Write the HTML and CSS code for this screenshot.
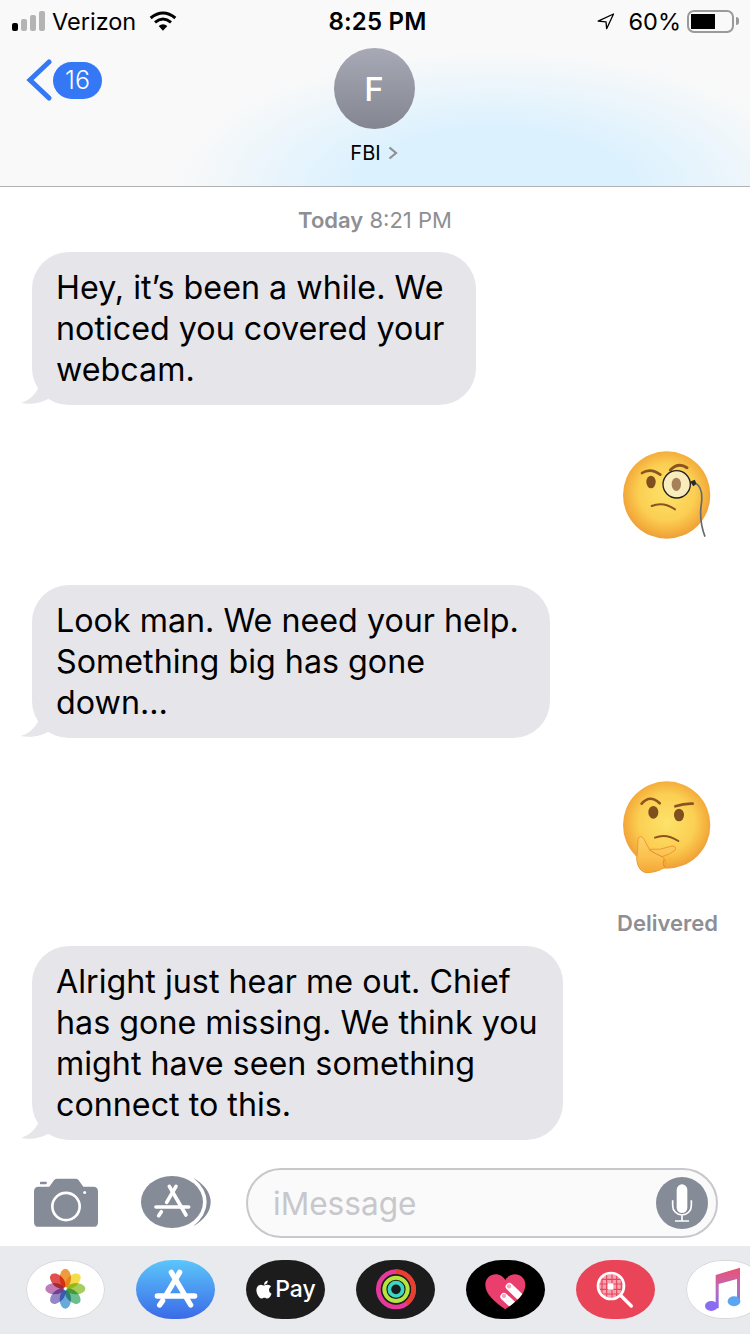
FILE: index.html
```html
<!DOCTYPE html>
<html lang="en">
<head>
<meta charset="utf-8">
<title>FBI</title>
<link rel="stylesheet" href="styles.css">
</head>
<body>
<div class="phone">
  <header class="header">
    <div class="status">
      <div class="status-left">
        <div class="signal"><i class="bar b1"></i><i class="bar b2"></i><i class="bar b3"></i><i class="bar b4"></i></div>
        <span class="carrier">Verizon</span>
        <svg class="wifi" viewBox="0 0 84 60"><path d="M5 21Q42-9 79 21" fill="none" stroke="#000" stroke-width="9"/><path d="M18 34Q42 14 66 34" fill="none" stroke="#000" stroke-width="9"/><path d="M29 45Q42 35 55 45L42 59z"/></svg>
      </div>
      <div class="time">8:25 PM</div>
      <div class="status-right">
        <svg class="loc" viewBox="0 0 54 52"><path d="M3 25L50 3 29 48 27 27z" fill="none" stroke="#000" stroke-width="4" stroke-linejoin="round"/></svg>
        <span class="pct">60%</span>
        <div class="battery"><div class="battery-fill"></div></div>
        <div class="battery-nub"></div>
      </div>
    </div>
    <nav class="nav">
      <div class="back">
        <svg class="back-chevron" viewBox="0 0 26 42"><path d="M23 3L4 21l19 18" fill="none" stroke="#3478f6" stroke-width="5" stroke-linecap="round" stroke-linejoin="miter"/></svg>
        <span class="badge">16</span>
      </div>
      <div class="contact">
        <div class="avatar">F</div>
        <div class="contact-name"><span>FBI</span><svg class="name-chevron" viewBox="0 0 10 14"><path d="M1.500 1.500L8 7l-6.500 5.500" fill="none" stroke="#8e8e93" stroke-width="2.200"/></svg></div>
      </div>
    </nav>
  </header>

  <main class="thread">
    <div class="stamp"><b>Today</b> 8:21 PM</div>
    <div class="bubble bubble-first">Hey, it’s been a while. We noticed you covered your webcam.<svg class="tail" viewBox="0 0 30 30"><path d="M20 0C20 14 12 24 0 28 10 30 22 28 30 22V0z" fill="#e5e5ea"/></svg></div>
    <div class="emoji-row emoji-gap-a">
      <svg class="emoji" viewBox="0 0 330 330">
        <defs>
          <radialGradient id="face1" cx="50%" cy="47%" r="52%"><stop offset="0" stop-color="#fde26a"/><stop offset=".62" stop-color="#fbcf52"/><stop offset=".9" stop-color="#f4ae3c"/><stop offset="1" stop-color="#eea13a"/></radialGradient>
        </defs>
        <circle cx="170" cy="165" r="131" fill="url(#face1)"/>
        <path d="M96 99Q122 82 151 104" fill="none" stroke="#8a5420" stroke-width="8" stroke-linecap="round"/>
        <path d="M181 90Q205 66 231 83" fill="none" stroke="#8a5420" stroke-width="9" stroke-linecap="round"/>
        <ellipse cx="123" cy="126" rx="14" ry="19" fill="#7f4f1e"/>
        <circle cx="200" cy="133" r="41" fill="#f8f0d4" fill-opacity=".8" stroke="#1f1f1f" stroke-width="4"/>
        <ellipse cx="199" cy="133" rx="14" ry="20" fill="#a68058"/>
        <path d="M125 198Q160 184 195 208" fill="none" stroke="#8a5420" stroke-width="6" stroke-linecap="round"/>
        <path d="M240 125l14-6 6 12-10 8z" fill="#2b2b2b"/>
        <path d="M258 130Q282 145 273 200 268 245 285 290" fill="none" stroke="#66686c" stroke-width="5"/>
      </svg>
    </div>
    <div class="bubble bubble-gap">Look man. We need your help. Something big has gone down…<svg class="tail" viewBox="0 0 30 30"><path d="M20 0C20 14 12 24 0 28 10 30 22 28 30 22V0z" fill="#e5e5ea"/></svg></div>
    <div class="emoji-row emoji-gap-b">
      <svg class="emoji" viewBox="0 0 330 330">
        <defs>
          <radialGradient id="face2" cx="50%" cy="47%" r="52%"><stop offset="0" stop-color="#fde26a"/><stop offset=".62" stop-color="#fbcf52"/><stop offset=".9" stop-color="#f4ae3c"/><stop offset="1" stop-color="#eea13a"/></radialGradient>
          <linearGradient id="hand" x1="0" y1="0" x2="0" y2="1"><stop offset="0" stop-color="#fdd36a"/><stop offset=".6" stop-color="#fbbf4e"/><stop offset="1" stop-color="#f5a636"/></linearGradient>
        </defs>
        <circle cx="170" cy="165" r="131" fill="url(#face2)"/>
        <path d="M95 101Q120 72 149 100" fill="none" stroke="#8a5420" stroke-width="8" stroke-linecap="round"/>
        <path d="M196 109Q222 100 248 101" fill="none" stroke="#8a5420" stroke-width="8" stroke-linecap="round"/>
        <ellipse cx="130" cy="127" rx="15" ry="19" fill="#7f4f1e"/>
        <ellipse cx="207" cy="135" rx="15" ry="19" fill="#7f4f1e"/>
        <path d="M135 203Q168 189 205 213" fill="none" stroke="#8a5420" stroke-width="6" stroke-linecap="round"/>
        <path d="M80 268Q84 232 84 208 90 192 101 206L118 238Q150 242 186 228 200 228 196 240 180 254 156 260 170 268 164 292 140 308 108 308 84 304 80 268z" fill="url(#hand)" stroke="#ee9a30" stroke-width="3"/>
        <path d="M118 240Q134 250 156 260" fill="none" stroke="#e08e2a" stroke-width="3"/>
        <path d="M162 268Q156 282 164 292" fill="none" stroke="#e08e2a" stroke-width="3"/>
      </svg>
    </div>
    <div class="delivered">Delivered</div>
    <div class="bubble bubble-last">Alright just hear me out. Chief has gone missing. We think you might have seen something connect to this.<svg class="tail" viewBox="0 0 30 30"><path d="M20 0C20 14 12 24 0 28 10 30 22 28 30 22V0z" fill="#e5e5ea"/></svg></div>
  </main>

  <section class="composer">
    <svg class="camera" viewBox="0 0 192 146">
      <path d="M14 26H46L60 6Q64 2 70 2H124Q130 2 134 6L148 26H178Q192 26 192 40V132Q192 146 178 146H14Q0 146 0 132V40Q0 26 14 26z" fill="#868b98"/>
      <rect x="18" y="11" width="20" height="7" rx="1" fill="#868b98"/>
      <circle cx="96" cy="85" r="41" fill="none" stroke="#fff" stroke-width="8"/>
      <circle cx="152" cy="43" r="4.500" fill="#fff"/>
    </svg>
    <svg class="apps" viewBox="0 0 216 162">
      <path d="M160 8Q212 40 212 81T160 154Q200 120 200 81T160 8z" fill="#868b98"/>
      <ellipse cx="96" cy="81" rx="93" ry="78" fill="#868b98"/>
      <g fill="none" stroke="#fff" stroke-width="11" stroke-linecap="round">
        <path d="M108 34L80 82"/><path d="M88 34l50 86"/><path d="M48 96h98"/><path d="M64 110l-8 12"/>
      </g>
    </svg>
    <div class="input">
      <span class="placeholder">iMessage</span>
      <svg class="mic" viewBox="0 0 156 156">
        <circle cx="78" cy="78" r="78" fill="#868b98"/>
        <rect x="62" y="22" width="32" height="86" rx="16" fill="#fff"/>
        <path d="M50 70v16a28 28 0 0 0 56 0V70M78 114v18M57 132h42" fill="none" stroke="#fff" stroke-width="5"/>
      </svg>
    </div>
  </section>

  <section class="strip">
    <div class="pill pill-white">
      <svg class="flower" viewBox="0 0 237 177">
        <ellipse class="petal" cx="118" cy="54" rx="17" ry="28" fill="#f09a3e"/>
        <ellipse class="petal" cx="118" cy="54" rx="17" ry="28" fill="#f4dd4c" transform="rotate(45 118 86)"/>
        <ellipse class="petal" cx="118" cy="54" rx="17" ry="28" fill="#a4cf5e" transform="rotate(90 118 86)"/>
        <ellipse class="petal" cx="118" cy="54" rx="17" ry="28" fill="#6cbf8c" transform="rotate(135 118 86)"/>
        <ellipse class="petal" cx="118" cy="54" rx="17" ry="28" fill="#6aa9dc" transform="rotate(180 118 86)"/>
        <ellipse class="petal" cx="118" cy="54" rx="17" ry="28" fill="#9487c8" transform="rotate(225 118 86)"/>
        <ellipse class="petal" cx="118" cy="54" rx="17" ry="28" fill="#c07cb8" transform="rotate(270 118 86)"/>
        <ellipse class="petal" cx="118" cy="54" rx="17" ry="28" fill="#e0504c" transform="rotate(315 118 86)"/>
      </svg>
    </div>
    <div class="pill pill-store">
      <svg viewBox="0 0 237 177">
        <g fill="none" stroke="#fff" stroke-width="16" stroke-linecap="round">
          <path d="M131 37L92 102"/><path d="M106 37l58 98"/><path d="M64 108h112"/><path d="M80 122l-9 13"/>
        </g>
      </svg>
    </div>
    <div class="pill pill-dark pill-pay">
      <svg class="apple" viewBox="3 3 17 18"><path fill="#fff" d="M17.050 20.280c-.98.95-2.050.8-3.080.35-1.090-.46-2.090-.48-3.240 0-1.440.62-2.200.44-3.060-.35C2.790 15.250 3.510 7.590 9.050 7.310c1.350.07 2.290.74 3.080.8 1.180-.24 2.310-.93 3.570-.84 1.510.12 2.650.72 3.400 1.800-3.120 1.870-2.380 5.980.48 7.130-.57 1.500-1.310 2.990-2.540 4.090zM12.030 7.250c-.15-2.230 1.660-4.070 3.740-4.250.29 2.580-2.340 4.500-3.740 4.250z"/></svg>
      <span class="pay">Pay</span>
    </div>
    <div class="pill pill-dark">
      <svg viewBox="0 0 237 177" fill="none">
        <circle cx="120" cy="88" r="53" stroke="#e6399b" stroke-width="14"/>
        <path d="M120 35A53 53 0 0 1 173 88 53 53 0 0 1 152 130" stroke="#e8402e" stroke-width="14"/>
        <circle cx="120" cy="88" r="35" stroke="#b4e63c" stroke-width="12"/>
        <circle cx="120" cy="88" r="20" stroke="#3ad6c6" stroke-width="11"/>
      </svg>
    </div>
    <div class="pill pill-black">
      <svg viewBox="0 0 237 177">
        <defs><clipPath id="heart-clip"><path d="M118 148C88 126 58 104 58 74 58 54 74 43 89 43 102 43 112 50 118 60 124 50 134 43 147 43 162 43 178 54 178 74 178 104 148 126 118 148z"/></clipPath></defs>
        <path d="M118 148C88 126 58 104 58 74 58 54 74 43 89 43 102 43 112 50 118 60 124 50 134 43 147 43 162 43 178 54 178 74 178 104 148 126 118 148z" fill="#ea3f6e"/>
        <g clip-path="url(#heart-clip)" fill="none" stroke="#fff" stroke-linecap="round" stroke-width="22">
          <path d="M130 80l50 48"/><path d="M114 110l50 46"/>
        </g>
        <circle cx="129" cy="79" r="6.500" fill="#f4a6ba"/>
        <circle cx="114" cy="108" r="6.500" fill="#f4a6ba"/>
      </svg>
    </div>
    <div class="pill pill-red">
      <svg viewBox="0 0 237 177">
        <defs><clipPath id="globe-clip"><circle cx="105" cy="78" r="36"/></clipPath></defs>
        <g clip-path="url(#globe-clip)">
          <rect x="65" y="38" width="80" height="80" fill="#f5a3b0"/>
          <path d="M65 58h80M65 72h80M65 88h80M65 102h80M78 38v80M92 38v80M108 38v80M122 38v80M136 38v80" stroke="#ea4459" stroke-width="3.500"/>
          <rect x="95" y="70" width="17" height="19" fill="#fff"/>
        </g>
        <circle cx="105" cy="78" r="39" fill="none" stroke="#fff" stroke-width="8"/>
        <path d="M136 108l30 30" stroke="#fff" stroke-width="10" stroke-linecap="round"/>
      </svg>
    </div>
    <div class="pill pill-white">
      <svg viewBox="0 0 237 177">
        <defs><linearGradient id="note" x1="0" y1="0" x2="0" y2="1"><stop offset="0" stop-color="#ee4f6e"/><stop offset=".55" stop-color="#b76cc0"/><stop offset="1" stop-color="#7f6cf0"/></linearGradient></defs>
        <path d="M89 45L162 23V128H153V57L98 72V145H89z" fill="url(#note)"/>
        <ellipse cx="76" cy="138" rx="19" ry="15" fill="#8a6cf2"/>
        <ellipse cx="144" cy="124" rx="19" ry="15" fill="#5ba6f2"/>
      </svg>
    </div>
  </section>
</div>
</body>
</html>
```

FILE: styles.css
```css
* { box-sizing: border-box; }
html, body { margin: 0; padding: 0; }
body { background: #fff; font-family: Inter, "Liberation Sans", sans-serif; color: #000; }
.phone { width: 750px; height: 1334px; display: flex; flex-direction: column; overflow: hidden; }

.header {
  height: 187px; flex: none;
  border-bottom: 1px solid #b2b2b2;
  background: radial-gradient(ellipse 320px 140px at 495px 190px, #dcf1fe 0, #dcf1fe 45%, rgba(220,241,254,0) 100%), #f9f9f9;
}
.status { height: 40px; display: grid; grid-template-columns: 1fr auto 1fr; align-items: center; padding: 2px 11px 0 12px; }
.status-left, .status-right { display: flex; align-items: center; }
.status-right { justify-content: flex-end; }
.signal { display: flex; align-items: flex-end; gap: 3px; height: 20px; }
.bar { display: block; width: 6px; border-radius: 2px; background: #b4b4b4; }
.b1 { height: 8px; background: #000; }
.b2 { height: 12px; }
.b3 { height: 16px; }
.b4 { height: 20px; }
.carrier { font-size: 23.500px; margin-left: 7px; }
.wifi { width: 28px; height: 20px; margin-left: 13px; }
.time { font-size: 24px; font-weight: 600; letter-spacing: .2px; margin-left: 4px; }
.loc { width: 18px; height: 17px; margin-right: -1px; }
.pct { font-size: 23.500px; margin-left: 15px; }
.battery { width: 47px; height: 23px; border: 2px solid #9a9a9a; border-radius: 7px; padding: 2px; margin-left: 6px; }
.battery-fill { width: 24px; height: 15px; background: #000; }
.battery-nub { width: 3px; height: 8px; margin-left: 2px; background: #9a9a9a; border-radius: 0 3px 3px 0; }

.nav { display: grid; grid-template-columns: 1fr auto 1fr; padding: 8px 2px 0 0; }
.back { display: flex; align-items: center; align-self: start; margin: 11px 0 0 26px; }
.back-chevron { width: 26px; height: 42px; }
.badge { width: 49px; height: 37px; border-radius: 19px; margin-left: 1px; background: #3478f6; color: #fff; font-size: 25px; font-weight: 300; display: flex; align-items: center; justify-content: center; }
.contact { display: flex; flex-direction: column; align-items: center; }
.avatar { width: 81px; height: 81px; border-radius: 50%; background: linear-gradient(#a7aab6, #83858f); color: #fff; font-size: 33px; font-weight: 500; display: flex; align-items: center; justify-content: center; }
.contact-name { display: flex; align-items: center; gap: 7px; margin-top: 11px; font-size: 20px; line-height: 26px; }
.name-chevron { width: 10px; height: 14px; }

.thread { flex: 1; display: flex; flex-direction: column; align-items: flex-start; padding-left: 32px; }
.stamp { align-self: center; margin: 20px 0 0 -32px; font-size: 22px; line-height: 26px; color: #8e8e93; }
.stamp b { font-weight: 600; }
.bubble { position: relative; background: #e5e5ea; border-radius: 37px; padding: 15px 20px 15px 24px; font-size: 32.250px; line-height: 41px; }
.bubble-first { width: 444px; margin-top: 19px; }
.bubble-gap { width: 518px; margin-top: 35px; }
.bubble-last { width: 531px; margin-top: 10px; }
.tail { position: absolute; left: -11px; bottom: 0; width: 30px; height: 30px; }
.emoji-row { align-self: flex-end; padding-right: 30px; display: flex; }
.emoji-gap-a { margin-top: 35px; }
.emoji-gap-b { margin-top: 32px; }
.emoji { width: 110px; height: 110px; }
.delivered { align-self: flex-end; margin: 30px 32px 0 0; font-size: 22px; font-weight: 600; line-height: 26px; color: #8e8e93; }

.composer { height: 86px; flex: none; display: flex; align-items: flex-start; padding: 8px 32px 0 34px; }
.camera { width: 64px; height: 49px; margin-top: 10px; }
.apps { width: 72px; height: 54px; margin: 7px 0 0 42px; }
.input { width: 472px; height: 70px; margin-left: 34px; border: 2px solid #c8c8cc; border-radius: 35px; background: #fafafa; display: flex; align-items: center; justify-content: space-between; padding: 0 8px 0 25px; }
.placeholder { font-size: 31.600px; color: #c7c7cc; }
.mic { width: 52px; height: 52px; }

.strip { height: 88px; flex: none; background: #e9eaee; display: flex; gap: 31px; padding: 14px 0 0 26px; }
.pill { width: 79px; height: 59px; flex: none; border-radius: 36px / 29.500px; display: flex; align-items: center; justify-content: center; }
.pill svg { display: block; width: 79px; height: 59px; }
.pill-white { background: #fff; box-shadow: inset 0 0 0 1px #d8d8dc; }
.pill-store { background: linear-gradient(#5cc6fa, #3a6ae8); }
.pill-dark { background: #1c1c1c; }
.pill-black { background: #000; }
.pill-red { background: #ea4459; }
.pill-pay { gap: 3px; padding-bottom: 1px; }
.pill-pay svg.apple { width: 17px; height: 19px; }
.pay { color: #fff; font-size: 23px; font-weight: 500; }
.flower { isolation: isolate; }
.petal { mix-blend-mode: multiply; }
```
